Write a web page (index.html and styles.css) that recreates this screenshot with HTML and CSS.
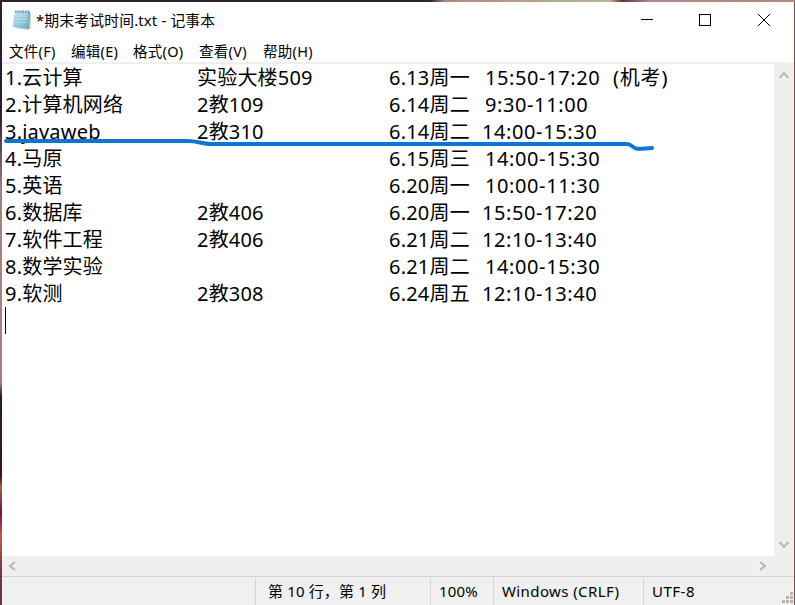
FILE: index.html
```html
<!DOCTYPE html>
<html lang="zh-CN">
<head>
<meta charset="utf-8">
<title>*期末考试时间.txt - 记事本</title>
<link rel="stylesheet" href="styles.css">
</head>
<body>
<div class="desktop">
<main class="window">
  <header class="titlebar">
    <svg class="app-icon" width="22" height="24" viewBox="0 0 22 24">
      <defs><linearGradient id="paper" x1="0" y1="0" x2="1" y2="1"><stop offset="0" stop-color="#c3e5ed"/><stop offset=".5" stop-color="#98cfdf"/><stop offset="1" stop-color="#63acc5"/></linearGradient></defs>
      <path d="M3 20L17 22L20 20V5L18 3Z" fill="#d8d6cf"/>
      <path d="M4 3L18.5 3.5L17 21L1.500 19Z" fill="url(#paper)"/>
      <path d="M5 8L16 8.500M4.500 11L15.500 11.500M4 14L15 14.500" stroke="#b2dfe9" fill="none"/>
      <path d="M4 3.500H19" stroke="#71929a" stroke-width="2" stroke-dasharray="1.500 1"/>
      <path d="M18.500 4L17.500 21" stroke="#5e9bab"/>
    </svg>
    <h1 class="title">*期末考试时间.txt - 记事本</h1>
    <svg class="controls" width="132" height="14" viewBox="0 0 132 14" fill="none" stroke="#000">
      <path d="M0 6.500H12"/><rect x="58.500" y="1.500" width="11" height="11"/><path d="M117 1L129 13M129 1L117 13"/>
    </svg>
  </header>
  <nav class="menu"><span>文件(F)</span><span>编辑(E)</span><span>格式(O)</span><span>查看(V)</span><span>帮助(H)</span></nav>
  <section class="body">
    <div class="editor">
      <div class="row"><span>1.云计算</span><span>实验大楼509</span><span>6.13周一</span><span class="time wide">15:50-17:20</span><span class="note">(机考)</span></div>
      <div class="row"><span>2.计算机网络</span><span>2教109</span><span>6.14周二</span><span class="time wide">9:30-11:00</span></div>
      <div class="row"><span>3.javaweb</span><span>2教310</span><span>6.14周二</span><span class="time">14:00-15:30</span></div>
      <div class="row"><span>4.马原</span><span></span><span>6.15周三</span><span class="time wide">14:00-15:30</span></div>
      <div class="row"><span>5.英语</span><span></span><span>6.20周一</span><span class="time wide">10:00-11:30</span></div>
      <div class="row"><span>6.数据库</span><span>2教406</span><span>6.20周一</span><span class="time">15:50-17:20</span></div>
      <div class="row"><span>7.软件工程</span><span>2教406</span><span>6.21周二</span><span class="time">12:10-13:40</span></div>
      <div class="row"><span>8.数学实验</span><span></span><span>6.21周二</span><span class="time wide">14:00-15:30</span></div>
      <div class="row"><span>9.软测</span><span>2教308</span><span>6.24周五</span><span class="time">12:10-13:40</span></div>
      <div class="caret"></div>
      <svg class="stroke" width="660" height="20" viewBox="0 0 660 20"><path d="M4 6H185Q192 6 198 7.500T209 9H625Q627 9 629 10.500T634 13.500Q640 14 650 13" fill="none" stroke="#0e76d0" stroke-width="4" stroke-linecap="round" stroke-linejoin="round"/></svg>
    </div>
    <div class="vscroll">
      <svg width="12" height="8" viewBox="0 0 12 8"><path d="M1.500 7L6 2L10.500 7"/></svg>
      <svg width="12" height="8" viewBox="0 0 12 8"><path d="M1.500 1L6 6L10.500 1"/></svg>
    </div>
  </section>
  <div class="hscroll">
    <svg width="8" height="10" viewBox="0 0 8 10"><path d="M7 1L2 5L7 9"/></svg>
    <svg width="8" height="10" viewBox="0 0 8 10"><path d="M1 1L6 5L1 9"/></svg>
  </div>
  <footer class="status">
    <span class="cell blank"></span><span class="cell position">第 10 行，第 1 列</span><span class="cell zoom">100%</span><span class="cell ending">Windows (CRLF)</span><span class="cell encoding">UTF-8</span>
    <svg class="grip" width="12" height="12" viewBox="0 0 12 12" fill="#b4b4b4"><path d="M9 0h3v3H9zM5 4h3v3H5zM9 4h3v3H9zM1 8h3v3H1zM5 8h3v3H5zM9 8h3v3H9z"/></svg>
  </footer>
</main>
</div>
</body>
</html>
```
FILE: styles.css
```css
* { box-sizing: border-box; }
body { margin: 0; overflow: hidden; font-family: "Noto Sans", "Noto Sans CJK SC", sans-serif; color: #000; }
.desktop {
  width: 795px; height: 605px; padding: 2px 1px 0 2px;
  background:
    linear-gradient(90deg, #30232d 0, #30232d 430px, #a98a80 445px, #c0b49a 610px, #5f3338 622px, #ba848a 650px, #a78f80 795px) 0 0 / 795px 2px no-repeat,
    linear-gradient(#2b1d29 0, #2b1d29 110px, #a48087 190px, #a48087 380px, #2c1829 395px, #371525 475px, #a45f50 485px, #701440 510px, #bd6040 535px, #713347 570px) 0 2px / 2px 603px no-repeat,
    #754d4b;
}
.window { width: 792px; height: 603px; background: #fff; display: flex; flex-direction: column; }
.titlebar { height: 36px; flex: none; display: flex; align-items: center; padding: 0 21px 0 9px; }
.title { margin: 0 0 0 3px; font-size: 14.8px; font-weight: 400; line-height: 20px; letter-spacing: .18px; white-space: pre; }
.controls { margin-left: auto; }
.menu { height: 26px; flex: none; display: grid; grid-template-columns: 62px 62px 66px 64px auto; padding: 3px 0 0 7px; font-size: 14.5px; line-height: 20px; letter-spacing: .3px; border-bottom: 2px solid #efefef; white-space: nowrap; }
.body { height: 492px; flex: none; display: flex; }
.editor { width: 772px; position: relative; padding-left: 3px; }
.row { display: grid; grid-template-columns: 192px 192px 93px 125px auto; height: 27px; line-height: 27px; font-size: 20px; letter-spacing: .2px; white-space: nowrap; }
.time { letter-spacing: .6px; }
.wide { padding-left: 3px; }
.note { padding-left: 6px; letter-spacing: .8px; }
.caret { width: 1px; height: 27px; background: #000; }
.stroke { position: absolute; left: 0; top: 71px; }
.vscroll { width: 20px; background: #efefef; display: flex; flex-direction: column; align-items: center; justify-content: space-between; padding: 7px 1px 7px 0; }
.vscroll svg, .hscroll svg { fill: none; stroke: #b8b8b8; stroke-width: 2; }
.hscroll { height: 20px; flex: none; background: #efefef; display: flex; align-items: center; justify-content: space-between; padding: 0 27px 0 6px; }
.status { height: 29px; flex: none; background: #f0f0f0; border-top: 1px solid #d4d4d4; display: flex; position: relative; font-size: 15px; line-height: 26px; letter-spacing: .15px; white-space: nowrap; }
.cell { border-right: 1px solid #d4d4d4; margin-top: 1px; }
.blank { width: 254px; }
.position { width: 175px; padding-left: 12px; }
.zoom { width: 63px; padding-left: 8px; }
.ending { width: 150px; padding-left: 8px; letter-spacing: .4px; }
.encoding { padding-left: 8px; border-right: 0; letter-spacing: .5px; }
.grip { position: absolute; right: 1px; bottom: 1px; }
```
